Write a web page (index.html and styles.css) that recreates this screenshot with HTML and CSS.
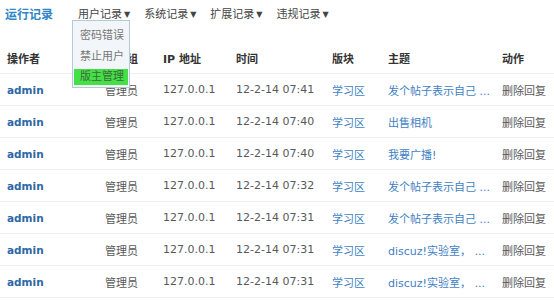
FILE: index.html
```html
<!DOCTYPE html>
<html lang="zh-CN">
<head>
    <meta charset="UTF-8">
    <title>运行记录</title>
    <link rel="stylesheet" href="styles.css">
</head>
<body>
    <div class="topbar">
        <span class="title">运行记录</span>
        <div class="menu">
            <span class="menu-item has-drop">用户记录<i class="arrow">▼</i>
                <div class="dropdown">
                    <div class="drop-item">密码错误</div>
                    <div class="drop-item">禁止用户</div>
                    <div class="drop-item active">版主管理</div>
                </div>
            </span>
            <span class="menu-item">系统记录<i class="arrow">▼</i></span>
            <span class="menu-item">扩展记录<i class="arrow">▼</i></span>
            <span class="menu-item">违规记录<i class="arrow">▼</i></span>
        </div>
    </div>

    <table class="log-table">
        <colgroup>
            <col style="width:98px">
            <col style="width:58px">
            <col style="width:73px">
            <col style="width:96px">
            <col style="width:56px">
            <col style="width:114px">
            <col>
        </colgroup>
        <thead>
            <tr>
                <th>操作者</th>
                <th>用户组</th>
                <th>IP 地址</th>
                <th>时间</th>
                <th>版块</th>
                <th>主题</th>
                <th>动作</th>
            </tr>
        </thead>
        <tbody>
            <tr><td class="user">admin</td><td>管理员</td><td>127.0.0.1</td><td>12-2-14 07:41</td><td class="link">学习区</td><td class="link">发个帖子表示自己 ...</td><td>删除回复</td></tr>
            <tr><td class="user">admin</td><td>管理员</td><td>127.0.0.1</td><td>12-2-14 07:40</td><td class="link">学习区</td><td class="link">出售相机</td><td>删除回复</td></tr>
            <tr><td class="user">admin</td><td>管理员</td><td>127.0.0.1</td><td>12-2-14 07:40</td><td class="link">学习区</td><td class="link">我要广播!</td><td>删除回复</td></tr>
            <tr><td class="user">admin</td><td>管理员</td><td>127.0.0.1</td><td>12-2-14 07:32</td><td class="link">学习区</td><td class="link">发个帖子表示自己 ...</td><td>删除回复</td></tr>
            <tr><td class="user">admin</td><td>管理员</td><td>127.0.0.1</td><td>12-2-14 07:31</td><td class="link">学习区</td><td class="link">发个帖子表示自己 ...</td><td>删除回复</td></tr>
            <tr><td class="user">admin</td><td>管理员</td><td>127.0.0.1</td><td>12-2-14 07:31</td><td class="link">学习区</td><td class="link">discuz!实验室， ...</td><td>删除回复</td></tr>
            <tr><td class="user">admin</td><td>管理员</td><td>127.0.0.1</td><td>12-2-14 07:31</td><td class="link">学习区</td><td class="link">discuz!实验室， ...</td><td>删除回复</td></tr>
        </tbody>
    </table>
</body>
</html>
```
FILE: styles.css
```css
body {
    margin: 0;
    background: #ffffff;
    font-family: "DejaVu Sans", "Noto Sans CJK SC", sans-serif;
    font-size: 11px;
    color: #595959;
}
.topbar {
    display: flex;
    align-items: center;
    height: 26px;
    padding-left: 5px;
}
.title {
    font-size: 12px;
    font-weight: bold;
    color: #2f86c8;
    width: 73px;
}
.menu {
    display: flex;
    gap: 14px;
}
.menu-item {
    position: relative;
    color: #444444;
}
.arrow {
    font-style: normal;
    font-size: 8px;
    margin-left: 2px;
    vertical-align: 1px;
}
.dropdown {
    position: absolute;
    left: -6px;
    top: 15px;
    width: 54px;
    padding: 4px 1px 2px;
    background: #f2f6fa;
    border: 1px solid #b4cad9;
    z-index: 2;
}
.drop-item {
    height: 21px;
    line-height: 21px;
    padding-left: 6px;
    color: #777777;
}
.drop-item.active {
    margin-top: 2px;
    height: 16px;
    line-height: 16px;
    background: #45e046;
    color: #3c6b3c;
}
.log-table {
    width: 100%;
    margin-top: 16px;
    border-collapse: collapse;
    table-layout: fixed;
}
.log-table th,
.log-table td {
    height: 31px;
    padding: 0 0 0 7px;
    text-align: left;
    white-space: nowrap;
    overflow: hidden;
    border-bottom: 1px solid #f0f0f0;
}
.log-table th {
    font-weight: bold;
    color: #333333;
}
.log-table td.user {
    font-weight: bold;
    font-size: 10.5px;
    color: #2f67a6;
}
.log-table td.link {
    color: #3f7fc4;
}
```
